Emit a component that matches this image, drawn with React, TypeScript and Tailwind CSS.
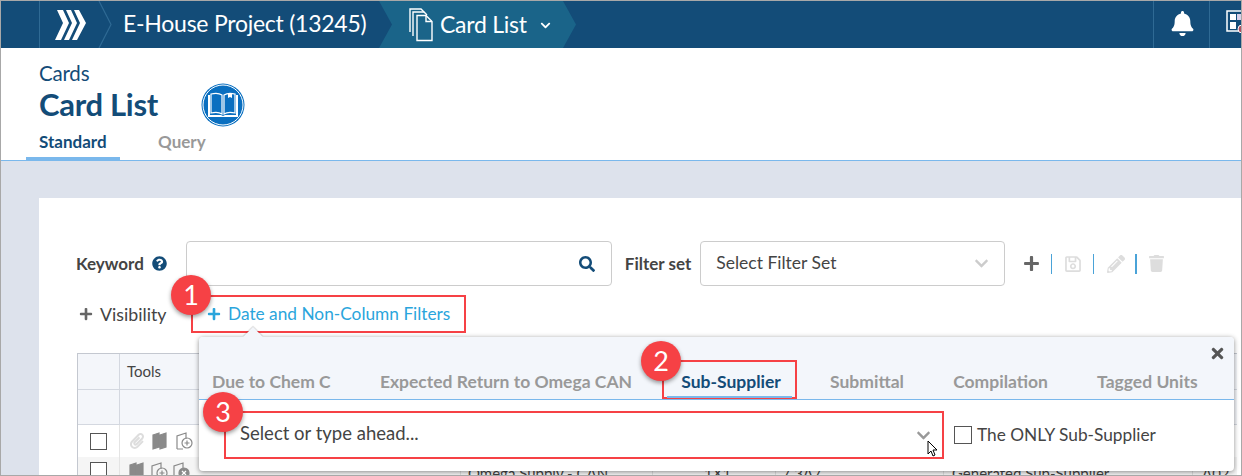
import React from 'react'
import { FaBell, FaSearch, FaQuestionCircle, FaPlus, FaRegSave, FaPencilAlt, FaTrash, FaTimes, FaPaperclip, FaChevronDown } from 'react-icons/fa'

function Crumb({ x }: { x: string }) {
  return (
    <svg className={`absolute top-0 ${x}`} width="14" height="47" viewBox="0 0 14 47" fill="none">
      <path d="M1 0 L13 23.5 L1 47" stroke="#2f6a94" strokeWidth="1.2" />
    </svg>
  )
}

function Logo() {
  return (
    <svg width="32" height="30" viewBox="0 0 32 30" fill="white">
      <path d="M2 0h6l6 13-8 17H0l8-17z" />
      <path d="M11 0h5l6 13-8 17H9l8-17z" />
      <path d="M19 0h5l7 13-9 17h-5l8-17z" />
    </svg>
  )
}

function FilesIcon() {
  return (
    <svg width="24" height="34" viewBox="0 0 24 34" fill="none" stroke="white" strokeWidth="1.4">
      <path d="M1 24V1h11l3 3" />
      <path d="M4 28V4h11l3 3" />
      <path d="M8 32.5V7.5h9l6 6v19z" fill="#1a6489" />
      <path d="M17 7.5v6h6" />
    </svg>
  )
}

function BookIcon() {
  return (
    <svg width="44" height="44" viewBox="0 0 44 44">
      <circle cx="22" cy="22" r="21.5" fill="#0a6fc0" />
      <circle cx="22" cy="22" r="20" fill="none" stroke="white" strokeWidth="1" />
      <path d="M7 12h2v20h11l2 1 2-1h11V12h2v22H7z" fill="white" />
      <path d="M10 11c4-1 8-1 11 1v19c-3-2-7-2-11-1zM23 12c3-2 7-2 11-1v19c-4-1-8-1-11 1z" fill="#0a6fc0" stroke="white" strokeWidth="1.2" />
      <path d="M27 10h4v5l-2-1-2 1z" fill="white" />
    </svg>
  )
}

function GridIcon() {
  return (
    <svg width="20" height="24" viewBox="0 0 20 24" className="shrink-0">
      <rect x="1" y="1" width="16" height="20" fill="none" stroke="white" strokeWidth="1.5" />
      <rect x="4" y="4" width="6" height="6" fill="white" />
      <rect x="11" y="4" width="5" height="6" fill="#d8d0e8" />
      <rect x="4" y="12" width="6" height="7" fill="white" />
      <circle cx="16" cy="19" r="4" fill="#b05060" stroke="white" />
    </svg>
  )
}

function CardTool({ plus, cross }: { plus?: boolean; cross?: boolean }) {
  return (
    <svg width="17" height="18" viewBox="0 0 17 18" fill="none" stroke="#8a8a8a" strokeWidth="1.2">
      {!plus && !cross && <path d="M1 3l6-2v14l-6 2zM8 3l6-2v14l-6 2z" fill="#8a8a8a" />}
      {(plus || cross) && <path d="M1 17V4l9-3v6M1 17h6" />}
      {plus && <><circle cx="11" cy="11" r="5" /><path d="M11 8.500v5M8.500 11h5" /></>}
      {cross && <><circle cx="11" cy="11" r="5" fill="#8a8a8a" /><path d="M9 9l4 4M13 9l-4 4" stroke="white" /></>}
    </svg>
  )
}

function Badge({ n, pos }: { n: number; pos: string }) {
  return (
    <div className={`absolute ${pos} z-20 flex h-10 w-10 items-center justify-center rounded-full bg-[#f64145] text-[27px] text-white shadow-[0_2px_4px_rgba(0,0,0,0.4)]`}>
      {n}
    </div>
  )
}

const popTabs = ['Due to Chem C', 'Expected Return to Omega CAN', 'Sub-Supplier', 'Submittal', 'Compilation', 'Tagged Units']

export default function App() {
  return (
    <div className="relative box-border h-[476px] w-[1242px] overflow-hidden border border-[#a8a8a8] bg-[#dde2ec] font-['Lato','Noto_Sans',sans-serif]">
      {/* top bar */}
      <div className="relative flex h-[47px] items-center bg-[#134c78] text-white">
        <div className="absolute left-[38px] top-0 h-full w-px bg-[#2f6a94]" />
        <div className="absolute left-[54px] top-[9px]"><Logo /></div>
        <Crumb x="left-[97px]" />
        <div className="absolute left-[122px] top-[7px] text-[23px] leading-[30px] tracking-[-0.25px]">E-House Project (13245)</div>
        <div className="absolute left-[378px] top-0 flex h-full w-[197px] items-center bg-[#1a6489] [clip-path:polygon(0_0,184px_0,197px_50%,184px_100%,0_100%,13px_50%)]">
          <div className="ml-[30px]"><FilesIcon /></div>
          <span className="ml-[7px] -mt-[2px] text-[23px] leading-[30px] tracking-[-0.25px]">Card List</span>
          <FaChevronDown className="ml-[13px] mt-[2px] text-[11px]" />
        </div>
        <div className="absolute left-[1152px] top-0 h-full w-px bg-[#2f6a94]" />
        <FaBell className="absolute left-[1169px] top-[10px] text-[25px]" />
        <div className="absolute left-[1208px] top-0 h-full w-px bg-[#2f6a94]" />
        <div className="absolute left-[1225px] top-[9px]"><GridIcon /></div>
      </div>

      {/* page header */}
      <div className="h-[113px] border-b border-[#7ab8ec] bg-white">
        <div className="pl-[38px] pt-[13px] text-[20.500px] leading-[24px] tracking-[-0.2px] text-[#134c78]">Cards</div>
        <div className="flex h-[38px] items-center pl-[38px]">
          <span className="text-[31px] font-bold leading-[36px] tracking-[-0.3px] text-[#134c78]">Card List</span>
          <span className="ml-[43px] mt-[1px]"><BookIcon /></span>
        </div>
        <div className="mt-[7px] flex pl-[25px] text-[17px] font-bold">
          <span className="h-[30px] w-[94px] border-b-[3px] border-[#7ab8ec] pl-[13px] leading-[24px] text-[#134c78]">Standard</span>
          <span className="ml-[38px] leading-[24px] text-[#999]">Query</span>
        </div>
      </div>

      {/* card */}
      <div className="ml-[38px] mt-[37px] h-[300px] bg-white pl-[37px] pt-[43px] text-[#444]">
        <div className="flex h-[45px] items-center">
          <span className="text-[17px] font-bold text-[#444]">Keyword</span>
          <FaQuestionCircle className="ml-[8px] text-[15px] text-[#134c78]" />
          <div className="ml-[19px] flex h-[45px] w-[426px] items-center justify-end rounded border border-[#ccc] pr-[16px]">
            <FaSearch className="text-[16px] text-[#134c78]" />
          </div>
          <span className="ml-[13px] text-[17px] font-bold">Filter set</span>
          <div className="ml-[9px] flex h-[45px] w-[305px] items-center justify-between rounded border border-[#ccc] pl-[15px] pr-[15px] text-[17.5px]">
            <span>Select Filter Set</span>
            <FaChevronDown className="text-[15px] text-[#ccc]" />
          </div>
          <FaPlus className="ml-[18px] text-[17px] text-[#666]" />
          <span className="ml-[11px] h-[20px] w-px bg-[#4aa3d8]" />
          <FaRegSave className="ml-[12px] text-[18px] text-[#ddd]" />
          <span className="ml-[11px] h-[20px] w-px bg-[#4aa3d8]" />
          <FaPencilAlt className="ml-[13px] text-[18px] text-[#ddd]" />
          <span className="ml-[10px] h-[20px] w-[2px] bg-[#4aa3d8]" />
          <FaTrash className="ml-[11px] text-[17px] text-[#ddd]" />
        </div>

        <div className="mt-[9px] flex h-[38px] items-center">
          <FaPlus className="ml-[3px] text-[14px] text-[#666]" />
          <span className="ml-[7px] w-[66px] whitespace-nowrap text-[17.8px]">Visibility</span>
          <div className="ml-[25px] flex h-[38px] w-[275px] items-center border-2 border-[#f64145] pl-[14px] text-[17.3px] text-[#2aa5dc]">
            <FaPlus className="text-[14px]" />
            <span className="ml-[7px]">Date and Non-Column Filters</span>
          </div>
        </div>

        {/* table behind the popover */}
        <div className="ml-[1px] mt-[20px] w-[1160px] border-l border-t border-[#c4c8d0] text-[15px]">
          <div className="flex h-[36px] border-b border-[#d4d8e0] bg-[#f4f6fa]">
            <div className="w-[42px] border-r border-[#d4d8e0]" />
            <div className="pl-[7px] pt-[6px]">Tools</div>
          </div>
          <div className="flex h-[35px] border-b border-[#d4d8e0] bg-[#f4f6fa]">
            <div className="w-[42px] border-r border-[#d4d8e0]" />
          </div>
          <div className="flex h-[32px]">
            <div className="flex w-[42px] items-center justify-center border-r border-[#e4e4e4]">
              <span className="h-[17px] w-[17px] border border-[#555]" />
            </div>
            <div className="flex items-center gap-[7px] pl-[9px]">
              <FaPaperclip className="text-[16px] text-[#ddd]" />
              <CardTool />
              <CardTool plus />
            </div>
          </div>
          <div className="flex h-[32px] bg-[#f5f5f5]">
            <div className="flex w-[42px] items-start justify-center border-r border-[#e4e4e4] pt-[5px]">
              <span className="h-[17px] w-[17px] border border-[#555] bg-white" />
            </div>
            <div className="flex w-[341px] items-start gap-[5px] border-r border-[#ddd] pl-[9px] pt-[5px]">
              <CardTool />
              <CardTool plus />
              <CardTool cross />
            </div>
            <div className="w-[192px] border-r border-[#ddd] pl-[7px] pt-[5px]">Omega Supply - CAN</div>
            <div className="w-[123px] border-r border-[#ddd] pl-[51px] pt-[5px]">1X1</div>
            <div className="w-[168px] border-r border-[#ddd] pl-[6px] pt-[5px]">7.3A7</div>
            <div className="w-[249px] border-r border-[#ddd] pl-[8px] pt-[5px]">Generated Sub-Supplier</div>
            <div className="pl-[9px] pt-[5px]">A02</div>
          </div>
        </div>
      </div>

      {/* filter popover */}
      <div className="absolute left-[198px] top-[336px] z-10 h-[134px] w-[1035px] rounded bg-white shadow-[0_1px_5px_rgba(0,0,0,0.45)]">
        <div className="absolute -top-[7px] left-[47px] h-[14px] w-[14px] rotate-45 bg-[#f3f6fb] shadow-[-1px_-1px_1px_rgba(0,0,0,0.15)]" />
        <div className="relative flex h-[63px] items-end gap-[49.2px] rounded-t border-b border-[#7ab8ec] bg-[#f3f6fb] pl-[13px] text-[17.5px] font-bold text-[#999]">
          {popTabs.map(tab => (
            <span key={tab} className={tab === 'Sub-Supplier' ? 'pb-[5px] leading-[24px] text-[#134c78]' : 'pb-[5px] leading-[24px]'}>{tab}</span>
          ))}
          <FaTimes className="absolute right-[8px] top-[8px] text-[17px] text-[#555]" />
        </div>
        <div className="flex items-center pl-[25px] pt-[11px]">
          <div className="relative flex h-[48px] w-[720px] items-center justify-between border-2 border-[#f64145] pl-[14px] pr-[11px] text-[18.5px] text-[#444]">
            <span className="-mt-[2px]">Select or type ahead...</span>
            <FaChevronDown className="text-[15px] text-[#999]" />
            <svg className="absolute left-[701px] top-[27px]" width="13" height="18" viewBox="0 0 13 18">
              <path d="M1 1v13l3-3 2 5 2-1-2-5h4z" fill="white" stroke="black" strokeWidth="1" />
            </svg>
          </div>
          <span className="ml-[10px] h-[18px] w-[18px] border border-[#555]" />
          <span className="ml-[5px] text-[17.3px] text-[#444]">The ONLY Sub-Supplier</span>
        </div>
        {/* annotation box over active tab */}
        <div className="absolute left-[463px] top-[23px] h-[39px] w-[135px] border-2 border-[#f64145]" />
        <div className="absolute left-[468px] top-[59px] h-[2px] w-[125px] bg-[#7ab8ec]" />
      </div>

      <Badge n={1} pos="left-[170px] top-[274px]" />
      <Badge n={2} pos="left-[640px] top-[340px]" />
      <Badge n={3} pos="left-[202px] top-[391px]" />
    </div>
  )
}
